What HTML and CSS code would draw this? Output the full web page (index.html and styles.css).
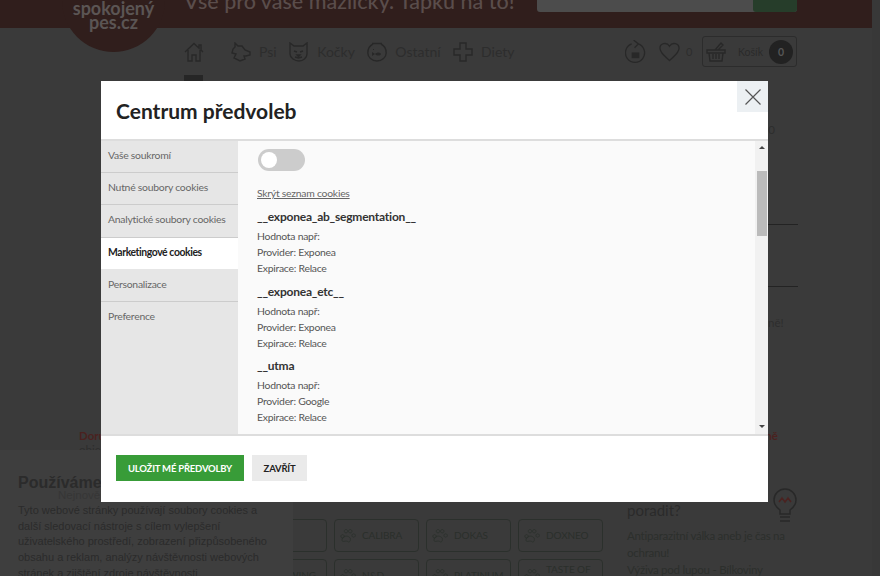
FILE: index.html
```html
<!DOCTYPE html>
<html lang="cs">
<head>
<meta charset="utf-8">
<title>Spokojený pes</title>
<link rel="stylesheet" href="styles.css">
</head>
<body>
<div class="page">
  <div class="site">
    <header class="top">
      <p class="slogan">Vše pro vaše mazlíčky. Ťapku na to!</p>
      <div class="search"><span class="search-btn"></span></div>
    </header>
    <div class="logo"><span>spokojený</span><span>pes.cz</span></div>
    <nav class="nav">
      <svg class="ico home" viewBox="0 0 20 20"><path d="M1 10 10 1.500l5 4.700V3h2v5l2 2M4 8v11h4v-6h4v6h4V8"/></svg>
      <svg class="ico" viewBox="0 0 20 20"><path d="M4 1l3 3 4 0 3 4 5 2 0 3-4 1-2 0 1 3-5 2-6-3 2-4-4-1 1-4 2-2z"/></svg>
      <span class="nav-label">Psi</span>
      <svg class="ico" viewBox="0 0 20 20"><path d="M1 1l4 3h9l4-3v11c0 4-4 7-8 7s-9-3-9-7z"/><path d="M5 9l3 1M14 9l-3 1M8 13h3l-1.500 1.500zM6 15l3.500 1 3.500-1"/></svg>
      <span class="nav-label">Kočky</span>
      <svg class="ico" viewBox="0 0 20 20"><path d="M5 1.500h10M6 2C2 4 .8 8 .8 11c0 4 4 8 9.200 8s9.200-4 9.200-8c0-3-1.200-7-5.200-9"/><path class="fill" d="M8 12c2-2 5-2 6 0-1 2-4 2-6 0zM5 10l3 2-3 2zM6 7h1v1H6z"/></svg>
      <span class="nav-label">Ostatní</span>
      <svg class="ico" viewBox="0 0 20 20"><path d="M7 1h6v6h6v6h-6v6H7v-6H1V7h6z"/></svg>
      <span class="nav-label">Diety</span>
      <span class="nav-space"></span>
      <svg class="ico refresh" viewBox="0 0 22 25"><path d="M14 4a10 10 0 1 1-7 0M9 0l5 4-4 4"/><path class="fill" d="M7 13h8v6H7z"/></svg>
      <svg class="ico heart" viewBox="0 0 22 20"><path d="M11 19C6 14 1 11 1 6c0-5 7-7 10-2 3-5 10-3 10 2 0 5-5 8-10 13z"/></svg>
      <span class="count">0</span>
      <div class="cart">
        <svg class="ico basket" viewBox="0 0 20 20"><path d="M1 8h18v3H1zM3 11l1 8h12l1-8M7 12v5M10 12v5M13 12v5M9 8l6-7 2 2-5 5"/></svg>
        <span class="cart-label">Košík</span>
        <span class="cart-count">0</span>
      </div>
    </nav>
    <main class="content">
      <div class="tab-mark"></div>
      <p class="stray stray-zero">0</p>
      <div class="rules">
        <div class="rule"></div>
        <div class="rule"></div>
        <p class="stray">ně!</p>
      </div>
      <div class="promo">
        <div class="promo-left"><strong>Doručení</strong><span>objednávky</span></div>
        <strong class="promo-right">ně</strong>
      </div>
      <div class="lower">
        <div class="brands">
          <div class="brand"></div>
          <div class="brand"><svg class="paw" viewBox="0 0 20 20"><path d="M3 13c2-3 7-3 9 0 1 3-1 6-3 4-2-1-4 0-5 0-2 0-2-2-1-4zM3 9a2 2 0 1 0 .1 0M7 3a2 2 0 1 0 .1 0M12 3a2 2 0 1 0 .1 0M16 8a2 2 0 1 0 .1 0"/></svg><span>CALIBRA</span></div>
          <div class="brand"><svg class="paw" viewBox="0 0 20 20"><path d="M3 13c2-3 7-3 9 0 1 3-1 6-3 4-2-1-4 0-5 0-2 0-2-2-1-4zM3 9a2 2 0 1 0 .1 0M7 3a2 2 0 1 0 .1 0M12 3a2 2 0 1 0 .1 0M16 8a2 2 0 1 0 .1 0"/></svg><span>DOKAS</span></div>
          <div class="brand"><svg class="paw" viewBox="0 0 20 20"><path d="M3 13c2-3 7-3 9 0 1 3-1 6-3 4-2-1-4 0-5 0-2 0-2-2-1-4zM3 9a2 2 0 1 0 .1 0M7 3a2 2 0 1 0 .1 0M12 3a2 2 0 1 0 .1 0M16 8a2 2 0 1 0 .1 0"/></svg><span>DOXNEO</span></div>
          <div class="brand brand-end"><span>WING</span></div>
          <div class="brand"><svg class="paw" viewBox="0 0 20 20"><path d="M3 13c2-3 7-3 9 0 1 3-1 6-3 4-2-1-4 0-5 0-2 0-2-2-1-4zM3 9a2 2 0 1 0 .1 0M7 3a2 2 0 1 0 .1 0M12 3a2 2 0 1 0 .1 0M16 8a2 2 0 1 0 .1 0"/></svg><span>N&amp;D</span></div>
          <div class="brand"><svg class="paw" viewBox="0 0 20 20"><path d="M3 13c2-3 7-3 9 0 1 3-1 6-3 4-2-1-4 0-5 0-2 0-2-2-1-4zM3 9a2 2 0 1 0 .1 0M7 3a2 2 0 1 0 .1 0M12 3a2 2 0 1 0 .1 0M16 8a2 2 0 1 0 .1 0"/></svg><span>PLATINUM</span></div>
          <div class="brand"><svg class="paw" viewBox="0 0 20 20"><path d="M3 13c2-3 7-3 9 0 1 3-1 6-3 4-2-1-4 0-5 0-2 0-2-2-1-4zM3 9a2 2 0 1 0 .1 0M7 3a2 2 0 1 0 .1 0M12 3a2 2 0 1 0 .1 0M16 8a2 2 0 1 0 .1 0"/></svg><span>TASTE OF<br>THE WILD</span></div>
        </div>
        <aside class="advice">
          <div class="advice-head">
            <h2>Potřebujete<br>poradit?</h2>
            <svg class="bulb" viewBox="0 0 24 36"><path d="M7 26v-4C3 19 1 16 1 12a11 11 0 0 1 22 0c0 4-2 7-6 10v4zM7 29h10M7 33h10"/><path class="bulb-m" d="M6 14l3-4 3 4 3-4 3 4"/></svg>
          </div>
          <p>Antiparazitní válka aneb je čas na ochranu!</p>
          <p>Výživa pod lupou - Bílkoviny</p>
        </aside>
      </div>
    </main>
  </div>

  <section class="banner">
    <h2>Používáme cookies</h2>
    <span class="banner-ghost">Nejnovější</span>
    <p>Tyto webové stránky používají soubory cookies a<br>další sledovací nástroje s cílem vylepšení<br>uživatelského prostředí, zobrazení přizpůsobeného<br>obsahu a reklam, analýzy návštěvnosti webových<br>stránek a zjištění zdroje návštěvnosti.</p>
  </section>

  <div class="modal">
    <header class="modal-head">
      <h1>Centrum předvoleb</h1>
      <button class="close" aria-label="Zavřít"><svg viewBox="0 0 16 16"><path d="M.5.5l15 15M15.500.5l-15 15"/></svg></button>
    </header>
    <div class="modal-body">
      <ul class="menu">
        <li>Vaše soukromí</li>
        <li>Nutné soubory cookies</li>
        <li>Analytické soubory cookies</li>
        <li class="active">Marketingové cookies</li>
        <li>Personalizace</li>
        <li>Preference</li>
      </ul>
      <div class="panel">
        <div class="toggle"><span class="knob"></span></div>
        <a class="hide-link" href="#">Skrýt seznam cookies</a>
        <div class="cookie">
          <h3>__exponea_ab_segmentation__</h3>
          <p>Hodnota např:</p><p>Provider: Exponea</p><p>Expirace: Relace</p>
        </div>
        <div class="cookie">
          <h3>__exponea_etc__</h3>
          <p>Hodnota např:</p><p>Provider: Exponea</p><p>Expirace: Relace</p>
        </div>
        <div class="cookie">
          <h3>__utma</h3>
          <p>Hodnota např:</p><p>Provider: Google</p><p>Expirace: Relace</p>
        </div>
      </div>
      <div class="scroll">
        <span class="arrow arrow-up"></span>
        <span class="thumb"></span>
        <span class="arrow arrow-down"></span>
      </div>
    </div>
    <footer class="modal-foot">
      <button class="btn btn-save">Uložit mé předvolby</button>
      <button class="btn btn-close">Zavřít</button>
    </footer>
  </div>
</div>
</body>
</html>
```

FILE: styles.css
```css
* { box-sizing: border-box; }
html, body { margin: 0; padding: 0; }
body { font-family: Lato, "Noto Sans", sans-serif; background: #383838; }
p, h1, h2, h3, ul { margin: 0; padding: 0; }
.page { position: relative; width: 880px; height: 576px; overflow: hidden; background: #383838; }
.site { width: 872px; height: 576px; background: #3a3a3a; overflow: hidden; }

.top { height: 28px; background: #301e1c; display: flex; padding-left: 184px; overflow: hidden; }
.slogan { font-size: 21.500px; line-height: 14px; height: 12px; width: 353px; margin-top: -6px; font-weight: 500; color: #5a4d4b; white-space: nowrap; }
.search { width: 260px; height: 12px; background: #4c4c4c; border-radius: 0 0 3px 3px; display: flex; justify-content: flex-end; }
.search-btn { width: 44px; height: 12px; background: #263d2a; border-radius: 0 0 3px 3px; }

.logo { position: absolute; left: 62px; top: -51px; width: 103px; height: 103px; border-radius: 50%; background: #301e1c; color: #5b5554; font-weight: 700; font-size: 18px; line-height: 14px; display: flex; flex-direction: column; align-items: center; justify-content: flex-end; padding-bottom: 23px; }

.nav { height: 47px; display: flex; align-items: center; padding: 0 75px 0 184px; color: #2d2d2d; font-size: 14px; }
.ico { width: 20px; height: 20px; fill: none; stroke: #282828; stroke-width: 1.400; flex: none; }
.ico .fill { fill: #282828; stroke: none; }
.home { margin-right: 27px; }
.nav-label { margin: 0 12.500px 0 8px; }
.nav-space { flex: 1; }
.refresh { width: 21px; height: 24px; margin-right: 13px; }
.heart { width: 21px; margin-right: 6px; }
.count { font-size: 11px; width: 16px; }
.cart { width: 95px; height: 31px; border: 1px solid #2c2c2c; border-radius: 3px; display: flex; align-items: center; padding: 0 3px; }
.basket { margin-right: 12px; }
.cart-label { font-size: 10.500px; color: #2a2a2a; flex: 1; }
.cart-count { width: 24px; height: 24px; border-radius: 50%; background: #222; color: #565656; font-size: 10.500px; font-weight: 700; display: flex; align-items: center; justify-content: center; }

.content { position: relative; }
.tab-mark { width: 19px; height: 6px; margin-left: 184px; background: #262626; }
.stray { font-size: 11.500px; line-height: 14px; color: #2d2d2d; text-align: right; }
.stray-zero { width: 775px; height: 0; margin-top: 42px; }
.rules { display: flow-root; width: 798px; padding-left: 768px; height: 0; }
.rule { height: 1px; background: #232323; }
.rules .rule:first-child { margin-top: 101px; }
.rules .rule + .rule { margin-top: 61px; }
.rules .stray { margin-top: 29px; width: 10px; white-space: nowrap; text-align: left; }

.promo { display: flex; justify-content: space-between; width: 778px; margin-top: 306px; padding-left: 79px; font-size: 11.500px; line-height: 14px; }
.promo strong { color: #4a2220; font-weight: 700; }
.promo-left { display: flex; flex-direction: column; width: 60px; color: #2d2d2d; }

.lower { display: flex; gap: 24px; padding-left: 242px; margin-top: 48px; }
.brands { display: grid; grid-template-columns: repeat(4, 85px); grid-auto-rows: 33px; gap: 7px; margin-top: 14px; width: 361px; flex: none; }
.brand { border: 1px solid #2b302c; border-radius: 4px; display: flex; align-items: center; gap: 5px; padding: 0 5px; font-size: 10px; letter-spacing: -.1px; line-height: 13px; color: #2a2f2b; }
.brand-end { justify-content: flex-end; padding-right: 10px; }
.paw { width: 17px; height: 17px; flex: none; fill: none; stroke: #2b302c; stroke-width: 1; }

.advice { width: 170px; color: #2c2f2c; font-size: 11.500px; letter-spacing: -.25px; line-height: 17px; }
.advice-head { position: relative; height: 50px; margin-top: -28px; }
.advice-head h2 { font-size: 15px; letter-spacing: 0; line-height: 20px; font-weight: 400; color: #2a2a2a; padding-top: 3px; }
.bulb { position: absolute; left: 146px; top: 11px; width: 24px; height: 36px; fill: none; stroke: #282828; stroke-width: 1.500; }
.bulb .bulb-m { stroke: #4a2220; }

.banner { position: absolute; left: 0; top: 450px; width: 293px; height: 126px; background: #3e3e3e; padding: 24px 18px 0; font-family: "Liberation Sans", Arial, sans-serif; color: #2b2b2b; }
.banner h2 { font-size: 16px; line-height: 18px; font-weight: 700; white-space: nowrap; margin-bottom: 11px; }
.banner-ghost { position: absolute; left: 58px; top: 39px; font-size: 11.500px; line-height: 13px; color: #363636; }
.banner p { font-size: 11px; line-height: 15.700px; white-space: nowrap; }

.modal { position: absolute; left: 101px; top: 81px; width: 667px; height: 421px; background: #fff; display: flex; flex-direction: column; }
.modal-head { height: 60px; border-bottom: 2px solid #ddd; display: flex; justify-content: space-between; align-items: flex-start; flex: none; }
.modal-head h1 { font-size: 21px; line-height: 27px; font-weight: 700; color: #222; padding: 16px 0 0 15px; }
.close { width: 31px; height: 31px; background: #ecf0f3; border: 0; padding: 0; display: flex; align-items: center; justify-content: center; }
.close svg { width: 16px; height: 16px; fill: none; stroke: #555; stroke-width: 1.200; }

.modal-body { height: 295px; display: flex; flex: none; border-bottom: 2px solid #ddd; }
.menu { width: 137px; list-style: none; background: #e6e6e6; flex: none; }
.menu li { height: 32.200px; border-bottom: 1px solid #ccc; padding-left: 7px; font-size: 10.400px; letter-spacing: -.25px; line-height: 28px; color: #666; white-space: nowrap; }
.menu li:last-child { border-bottom: 0; }
.menu .active { background: #fff; color: #222; font-weight: 700; letter-spacing: -.4px; border-bottom-color: #e6e6e6; }

.panel { flex: 1; background: #fafafa; padding: 8px 0 0 19px; overflow: hidden; font-size: 10.400px; letter-spacing: -.25px; line-height: 16px; color: #555; }
.toggle { width: 47px; height: 22px; margin-left: 1px; background: #ccc; border-radius: 11px; padding: 3px; }
.knob { display: block; width: 16px; height: 16px; border-radius: 50%; background: #fff; }
.hide-link { display: block; margin-top: 14px; color: #666; text-decoration: underline; }
.cookie { margin-top: 8px; height: 66.700px; }
.cookie h3 { font-size: 12px; letter-spacing: -.22px; line-height: 16px; font-weight: 700; color: #333; margin-bottom: 3px; }

.scroll { width: 13px; background: #f1f1f1; flex: none; display: flex; flex-direction: column; align-items: center; padding-top: 5px; }
.arrow { width: 0; height: 0; border-left: 3.500px solid transparent; border-right: 3.500px solid transparent; }
.arrow-up { border-bottom: 3.500px solid #444; }
.arrow-down { border-top: 3.500px solid #444; margin-top: auto; margin-bottom: 6px; }
.thumb { width: 10px; height: 65px; background: #bbb; margin-top: 22px; }

.modal-foot { flex: 1; display: flex; align-items: flex-start; gap: 8px; padding: 19px 0 0 15px; }
.btn { height: 26px; border: 0; font-family: inherit; font-size: 9.500px; letter-spacing: -.2px; font-weight: 700; text-transform: uppercase; padding: 0; }
.btn-save { width: 128px; background: #389c38; color: #fff; }
.btn-close { width: 55px; background: #eaeaea; color: #222; }
```
